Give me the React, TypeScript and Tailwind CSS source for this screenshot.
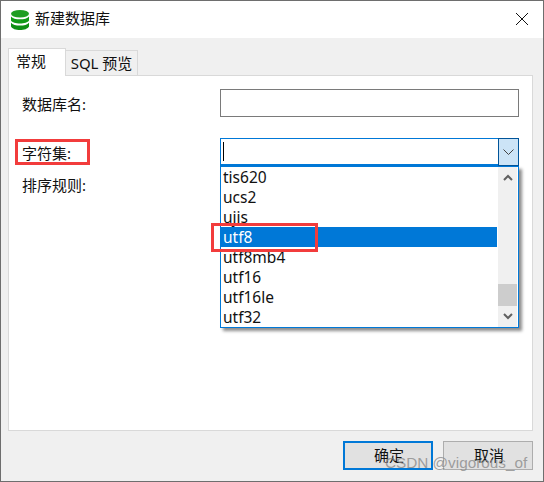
const charsets = ["tis620", "ucs2", "ujis", "utf8", "utf8mb4", "utf16", "utf16le", "utf32"];

function DbIcon() {
  return (
    <svg width="18" height="20" viewBox="0 0 18 20" className="shrink-0">
      <ellipse cx="9" cy="3.800" rx="9" ry="3.800" fill="#1f9e22" />
      <path d="M0 6.500c1.500 2 5 2.800 9 2.800s7.500-.8 9-2.800v4c-1 2-5 3-9 3s-8-1-9-3z" fill="#129a17" />
      <path d="M0 12.800c1.500 2 5 2.800 9 2.800s7.500-.8 9-2.800v3.600c-1 2.200-5 3.600-9 3.600s-8-1.400-9-3.600z" fill="#0f8f14" />
    </svg>
  );
}

function Row({ label, children }: { label: string; children: React.ReactNode }) {
  return (
    <div className="flex h-[28px] items-center justify-between pr-[13px]">
      <span className="mt-[2px] text-[15px] text-[#111]">{label}</span>
      {children}
    </div>
  );
}

export default function App() {
  return (
    <div className="relative flex h-[482px] w-[544px] flex-col overflow-hidden border border-[#6e6e6e] bg-[#f0f0f0] font-['Noto_Sans','Noto_Sans_CJK_SC',sans-serif] text-[#111]">
      <div className="flex h-[37px] shrink-0 items-center justify-between bg-white pl-[10px] pr-[15px]">
        <div className="flex items-center gap-[6px]">
          <DbIcon />
          <span className="-mt-[2px] text-[15px] leading-none">新建数据库</span>
        </div>
        <svg width="12" height="12" viewBox="0 0 12 12" className="-mt-[1px]">
          <path d="M0 0l12 12M12 0L0 12" stroke="#111" strokeWidth="1" fill="none" />
        </svg>
      </div>

      <div className="flex flex-1 flex-col pl-[7px] pr-[10px] pt-[10px]">
        <div className="relative z-10 flex h-[28px] items-end">
          <div className="flex h-[28px] w-[58px] items-start border border-b-0 border-[#d9d9d9] bg-white pl-[7px] pt-[1px] text-[15px]">常规</div>
          <div className="-ml-px flex h-[26px] w-[73px] items-center justify-center whitespace-nowrap border border-[#d9d9d9] bg-[#f0f0f0] text-[15px]">SQL 预览</div>
        </div>

        <div className="-mt-px flex h-[356px] flex-col border border-[#d9d9d9] bg-white pl-[13px] pt-[13px]">
          <Row label="数据库名:">
            <div className="h-[28px] w-[299px] border border-[#7a7a7a]" />
          </Row>
          <div className="mt-[21px]">
            <Row label="字符集:">
              <div className="relative z-10 h-[28px] w-[299px]">
                <div className="flex h-[28px] items-stretch justify-between border border-b-2 border-[#0078d7] bg-white">
                  <div className="ml-[2px] mt-[3px] h-[19px] w-px bg-black" />
                  <div className="-mb-[2px] -mr-px -mt-px flex w-[21px] items-center justify-center border border-[#005499] bg-[#cce4f7]">
                    <svg width="11" height="6" viewBox="0 0 11 6">
                      <path d="M.5.500l5 5 5-5" stroke="#444" strokeWidth="1" fill="none" />
                    </svg>
                  </div>
                </div>
                <div className="absolute left-0 top-[28px] flex h-[162px] w-[299px] border border-[#0078d7] bg-white shadow-[3px_3px_3px_rgba(0,0,0,0.45)]">
                  <ul className="w-[276px] text-[15.5px]">
                    {charsets.map((name) => (
                      <li
                        key={name}
                        className={
                          name === "utf8"
                            ? "flex h-[20px] items-center bg-[#0078d7] pl-[2px] pt-[2px] leading-none text-white"
                            : "flex h-[20px] items-center pl-[2px] pt-[2px] leading-none text-[#111]"
                        }
                      >
                        {name}
                      </li>
                    ))}
                  </ul>
                  <div className="ml-px flex w-[19px] flex-col items-center justify-between bg-[#f0f0f0]">
                    <div className="flex h-[20px] items-center">
                      <svg width="10" height="7" viewBox="0 0 10 7">
                        <path d="M1 6l4-4 4 4" stroke="#606060" strokeWidth="2" fill="none" />
                      </svg>
                    </div>
                    <div className="flex-1" />
                    <div className="h-[22px] w-full bg-[#cdcdcd]" />
                    <div className="flex h-[21px] items-center">
                      <svg width="10" height="7" viewBox="0 0 10 7">
                        <path d="M1 1l4 4 4-4" stroke="#606060" strokeWidth="2" fill="none" />
                      </svg>
                    </div>
                  </div>
                </div>
              </div>
            </Row>
          </div>
          <div className="mt-[4px]">
            <Row label="排序规则:">
              <div />
            </Row>
          </div>
        </div>

        <div className="mt-[10px] flex justify-end gap-[10px]">
          <button className="h-[29px] w-[90px] border-2 border-[#0078d7] bg-[#e1e1e1] pl-[2px] text-[15px]">确定</button>
          <button className="h-[29px] w-[90px] border border-[#adadad] bg-[#e1e1e1] pl-[2px] text-[15px]">取消</button>
        </div>
      </div>

      {/* red annotation boxes and watermark */}
      <div className="absolute left-[14px] top-[138px] z-20 h-[26px] w-[75px] border-[3px] border-[#f23c3c]" />
      <div className="absolute left-[210px] top-[222px] z-20 h-[29px] w-[107px] border-[3px] border-[#f23c3c]" />
      <div className="absolute left-[384px] top-[453px] z-20 whitespace-nowrap font-['Liberation_Sans',sans-serif] text-[15.3px] leading-[18px] text-[#8a8a8a]/80">
        CSDN @vigorous_of
      </div>
    </div>
  );
}
